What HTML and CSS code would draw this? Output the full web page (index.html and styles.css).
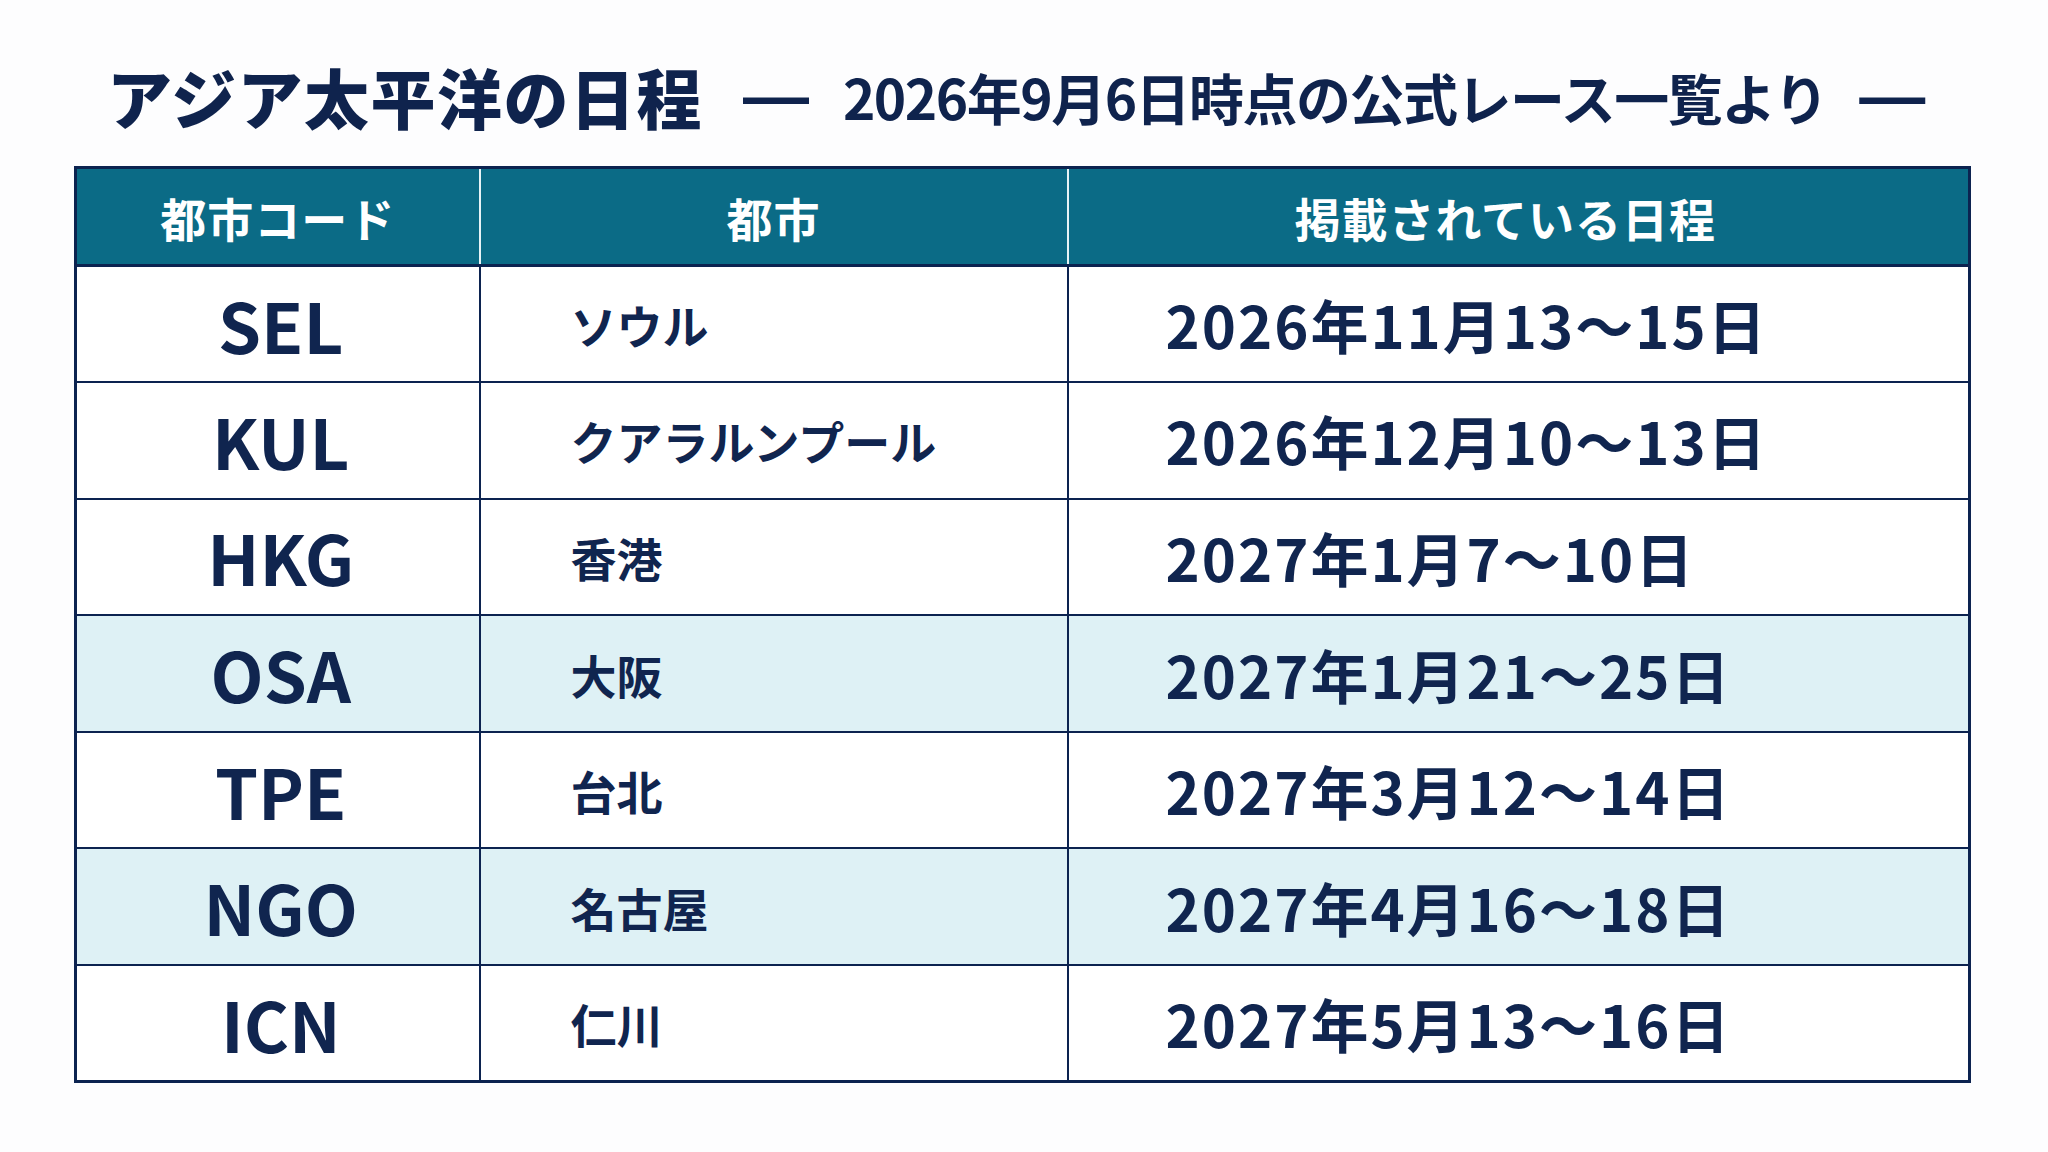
FILE: index.html
```html
<!DOCTYPE html>
<html lang="ja">
<head>
<meta charset="utf-8">
<title>アジア太平洋の日程</title>
<link rel="stylesheet" href="styles.css">
</head>
<body>
<main class="page">
  <header class="title-row">
    <h1 class="title">アジア太平洋の日程</h1>
    <span class="dash dash-left">—</span>
    <p class="subtitle">2026年9月6日時点の公式レース一覧より</p>
    <span class="dash dash-right">—</span>
  </header>
  <table class="schedule">
    <colgroup>
      <col class="col-code">
      <col class="col-city">
      <col class="col-date">
    </colgroup>
    <thead>
      <tr>
        <th>都市コード</th>
        <th>都市</th>
        <th class="th-date">掲載されている日程</th>
      </tr>
    </thead>
    <tbody>
      <tr>
        <td class="code">SEL</td>
        <td class="city">ソウル</td>
        <td class="date">2026年11月13～15日</td>
      </tr>
      <tr>
        <td class="code">KUL</td>
        <td class="city">クアラルンプール</td>
        <td class="date">2026年12月10～13日</td>
      </tr>
      <tr>
        <td class="code">HKG</td>
        <td class="city">香港</td>
        <td class="date">2027年1月7～10日</td>
      </tr>
      <tr class="hl">
        <td class="code">OSA</td>
        <td class="city">大阪</td>
        <td class="date">2027年1月21～25日</td>
      </tr>
      <tr>
        <td class="code">TPE</td>
        <td class="city">台北</td>
        <td class="date">2027年3月12～14日</td>
      </tr>
      <tr class="hl">
        <td class="code">NGO</td>
        <td class="city">名古屋</td>
        <td class="date">2027年4月16～18日</td>
      </tr>
      <tr>
        <td class="code">ICN</td>
        <td class="city">仁川</td>
        <td class="date">2027年5月13～16日</td>
      </tr>
    </tbody>
  </table>
</main>
</body>
</html>
```

FILE: styles.css
```css
* {
  box-sizing: border-box;
}

html, body {
  margin: 0;
  padding: 0;
}

body {
  background: #fdfdfe;
  color: #10254f;
  font-family: "Noto Sans CJK JP", "Noto Sans", sans-serif;
  width: 2048px;
  height: 1152px;
  overflow: hidden;
}

.page {
  padding: 36px 0 0 74px;
}

.title-row {
  display: flex;
  align-items: center;
  height: 120px;
  padding-left: 33px;
  margin-bottom: 10px;
}

.title {
  margin: 0;
  font-size: 65px;
  font-weight: 900;
  line-height: 1;
  letter-spacing: 1.5px;
  color: #0f234d;
}

.dash {
  font-family: "Liberation Sans", sans-serif;
  font-size: 66px;
  line-height: 1;
  font-weight: 700;
  color: #0f234d;
}

.dash-left {
  margin-left: 40px;
  margin-right: 34px;
}

.dash-right {
  margin-left: 32px;
}

.subtitle {
  margin: 0;
  font-size: 55px;
  font-weight: 700;
  line-height: 1;
  letter-spacing: -1.5px;
  color: #0f234d;
}

.schedule {
  width: 1894px;
  border-collapse: collapse;
  table-layout: fixed;
  border: 3px solid #0c2350;
}

.col-code { width: 404px; }
.col-city { width: 588px; }
.col-date { width: 902px; }

.schedule th {
  height: 98px;
  background: #0b6b86;
  color: #ffffff;
  font-size: 46px;
  font-weight: 700;
  line-height: 1;
  letter-spacing: 1px;
  text-align: center;
  padding: 0;
  border-bottom: 3px solid #0c2350;
  border-left: 2px solid #e8f3f6;
}

.schedule th:first-child {
  border-left: 3px solid #0c2350;
}

.schedule th.th-date {
  padding-right: 26px;
}

.schedule td {
  height: 116.6px;
  padding: 0;
  border: 2px solid #0c2350;
  background: #ffffff;
  line-height: 1;
  vertical-align: middle;
}

.schedule tr.hl td {
  background: #def1f5;
}

.code {
  text-align: center;
  font-size: 69px;
  font-weight: 700;
  padding-left: 6px !important;
}

.city {
  padding-left: 90px !important;
  font-size: 46px;
  font-weight: 700;
}

.date {
  padding-left: 97px !important;
  font-size: 58px;
  font-weight: 700;
  letter-spacing: 2px;
  font-variant-numeric: tabular-nums;
}
```
